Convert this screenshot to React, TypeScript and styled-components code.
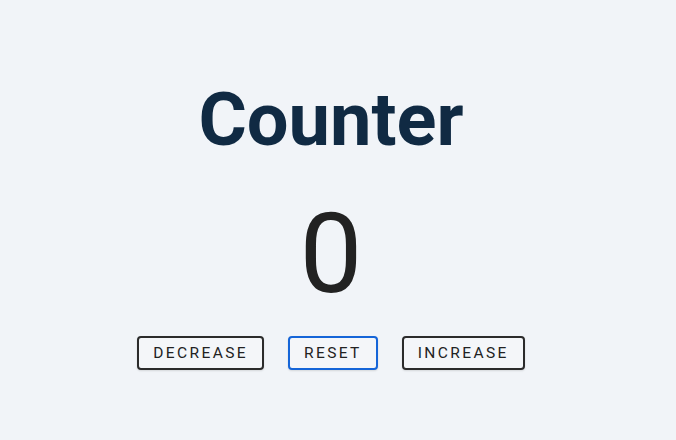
import styled, { createGlobalStyle } from 'styled-components';
import { useState } from 'react';

const GlobalStyle = createGlobalStyle`
  html, body {
    margin: 0;
    padding: 0;
    background: #f1f4f8;
  }
  body {
    font-family: Roboto, "Liberation Sans", sans-serif;
  }
`;

const Page = styled.main`
  min-height: 440px;
  display: flex;
  flex-direction: column;
  align-items: center;
  padding: 77px 14px 0 0;
  box-sizing: border-box;
`;

const Title = styled.h1`
  margin: 0;
  font-size: 74px;
  font-weight: 700;
  line-height: 86px;
  color: #102a43;
`;

const Count = styled.div`
  margin-top: 27px;
  font-size: 112px;
  font-weight: 400;
  line-height: 128px;
  color: #222;
`;

const Controls = styled.div`
  display: flex;
  gap: 24px;
  margin-top: 18px;
`;

const Button = styled.button<{ $focused?: boolean }>`
  height: 34px;
  padding: 0 14px;
  background: #f4f6f9;
  border: 2px solid ${(p) => (p.$focused ? '#1565d8' : '#2b2b2b')};
  border-radius: 4px;
  box-shadow: 0 1px 2px rgba(0, 0, 0, 0.12);
  font-family: Roboto, "Liberation Sans", sans-serif;
  font-size: 15.5px;
  letter-spacing: 2.4px;
  text-transform: uppercase;
  color: #222;
  cursor: pointer;
`;

export default function App() {
  const [count, setCount] = useState(0);

  return (
    <>
      <GlobalStyle />
      <Page>
        <Title>Counter</Title>
        <Count>{count}</Count>
        <Controls>
          <Button onClick={() => setCount(count - 1)}>Decrease</Button>
          <Button $focused onClick={() => setCount(0)}>Reset</Button>
          <Button onClick={() => setCount(count + 1)}>Increase</Button>
        </Controls>
      </Page>
    </>
  );
}
